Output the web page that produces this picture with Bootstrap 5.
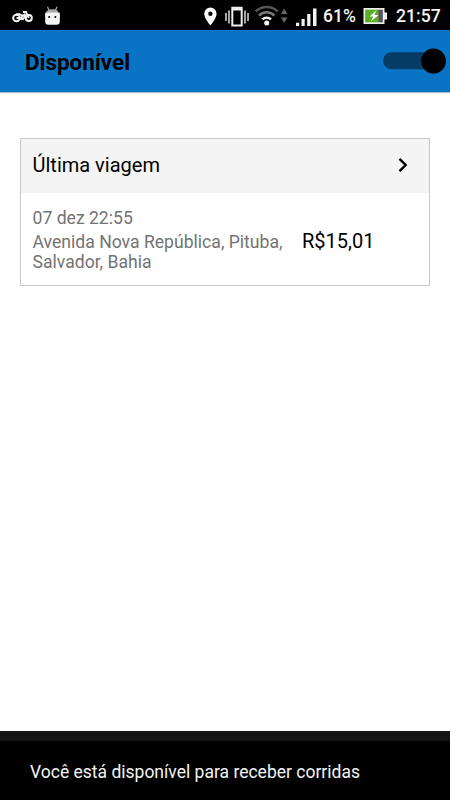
<!DOCTYPE html>
<html lang="pt-BR">
<head>
<meta charset="utf-8">
<meta name="viewport" content="width=device-width, initial-scale=1">
<title>Disponível</title>
<link href="https://cdn.jsdelivr.net/npm/bootstrap@5.3.0/dist/css/bootstrap.min.css" rel="stylesheet">
<style>
  body { font-family: Roboto, sans-serif; color: #000; background: #fff; line-height: 1; }
  svg { display: block; flex: none; }
  .status-bar { height: 30px; padding: 2px 10px 0 11px; background: #000; color: #f5f5f5; font-weight: 500; }
  .battery-level { font-size: 17.5px; margin-left: 5px; padding-top: 2px; width: 34px; white-space: nowrap; }
  .battery { margin: 0 0 1px 5px; }
  .clock { width: 44px; margin-left: 8px; padding-top: 2px; font-size: 17.6px; white-space: nowrap; }
  .app-bar { height: 62px; padding: 1px 4px 0 25px; background: #0a74c4; box-shadow: 0 1px 1px rgba(10,80,130,.35); }
  .app-title { font-size: 22.4px; font-weight: 700; line-height: 26px; }
  .switch-art { width: 63px; height: 30px; }
  .trip-card { margin: 46px 20px 0; height: 148px; border: 1px solid #c9c9c9; border-radius: 0; color: #000; }
  .trip-head { height: 54px; padding: 0 20px 3px 11.5px; background: #f4f4f4; border: 0; font-size: 20px; }
  .trip-head:first-child { border-radius: 0; }
  .trip-body { padding: 15px 0 0 11.5px; }
  .trip-place { width: 269.5px; color: #737373; font-size: 17.6px; line-height: 20.5px; }
  .trip-date { margin-bottom: 3px; }
  .trip-price { padding-top: 23px; font-size: 20px; }
  .snack { height: 69px; padding: 4px 30px 0; background: #000; color: #f4f4f4; border-top: 10px solid #151515; box-shadow: inset 0 0 0 #777; font-size: 17.5px; }
  main { border-bottom: 0; }
</style>
<script src="https://cdn.jsdelivr.net/npm/bootstrap@5.3.0/dist/js/bootstrap.bundle.min.js"></script>
</head>
<body class="d-flex flex-column vh-100 overflow-hidden">
  <div class="status-bar d-flex align-items-center justify-content-between">
    <div class="d-flex align-items-center">
      <svg width="22" height="24" viewBox="0 .5 22 24" fill="none" stroke="#f4f4f4" stroke-width="2">
        <circle cx="5.500" cy="14.500" r="3.300"/><circle cx="17.800" cy="14.500" r="3"/>
        <path d="M5.500 14.500h4l4.900-4M5 10.700h3.500l3 1.300h4M12 8.500h3l2.800 6M9 15.500h3l3-3.500" stroke-width="1.900"/>
      </svg>
      <svg class="ms-2" width="24" height="24" viewBox="0 .8 24 24">
        <path d="M6.500 3.500 8 7M16 3.500 14.500 7" stroke="#aaa" stroke-width="1.200"/>
        <path d="M5 10Q5.500 6 11.300 6T17.800 10z" fill="#aaa"/>
        <rect x="4.200" y="9.500" width="14.600" height="12" rx="3.200" fill="#f4f4f4"/>
        <path d="M4.200 9.500h14.600v4H4.200z" fill="#f4f4f4"/>
        <circle cx="8.200" cy="13.800" r="1" fill="#000"/><circle cx="14.400" cy="13.800" r="1" fill="#000"/>
      </svg>
    </div>
    <div class="d-flex align-items-center">
      <svg width="116" height="26" viewBox="202 2.500 116 26">
        <path fill="#fff" fill-rule="evenodd" d="M210.400 7a6.200 6.200 0 0 0-6.200 6.200c0 4.600 6.200 11.600 6.200 11.600s6.200-7 6.200-11.600A6.200 6.200 0 0 0 210.400 7zm0 4a2.200 2.200 0 1 1 0 4.400 2.200 2.200 0 0 1 0-4.400z"/>
        <path fill="none" stroke="#ededed" stroke-width="2" d="M232.300 7.300h9.400v17.800h-9.400zM232.300 9h9.400"/>
        <path fill="none" stroke="#ddd" stroke-width="1.500" d="M229 10v13M226 12.500v8M245 10v13M248 12.500v8"/>
        <g fill="none" stroke-width="2.500">
          <path stroke="#555" d="M255.700 11.200a15.500 15.500 0 0 1 22 0"/>
          <path stroke="#777" d="M259 15.100a10.800 10.800 0 0 1 15.400 0"/>
          <path stroke="#eee" d="M262.400 18.900a6.200 6.200 0 0 1 8.600 0"/>
        </g>
        <circle cx="266.700" cy="22.600" r="2.500" fill="#fff"/>
        <path fill="#666" d="m281 13.500 3.200-5.500 3.200 5.500zM281 17h6.400l-3.200 5.500z"/>
        <path fill="#f3f3f3" d="M296 22.300h3.200v3.200H296zM301.500 18.500h3.200v7h-3.200zM307.200 13.500h3.200v12h-3.200zM313 8h3.500v17.500H313z"/>
      </svg>
      <span class="battery-level">61%</span>
      <svg class="battery" width="26" height="18" viewBox="0 0 26 18">
        <path fill="#eee" d="M1.500 1h21v4.500H25v7h-2.500V17h-21z"/>
        <path fill="#58ad20" d="M3.200 2.700h13v12.600h-13z"/><path fill="#555" d="M16.200 2.700h4.600v12.600h-4.600z"/>
        <path fill="#fff" d="m14.500 3.200-7 6.200h3.700l-2.400 5 7.800-6.500h-4.200z"/>
      </svg>
      <span class="clock">21:57</span>
    </div>
  </div>

  <header class="app-bar d-flex align-items-center justify-content-between">
    <h1 class="app-title mb-0">Disponível</h1>
    <svg class="switch-art" viewBox="0 0 63 30" role="switch" aria-checked="true" aria-label="Disponível">
      <rect x="0" y="5.300" width="55" height="17" rx="8.500" fill="#063d66"/>
      <circle cx="50.500" cy="14.700" r="12.500" fill="#064477" opacity=".55"/>
      <circle cx="50.500" cy="13.900" r="12.400" fill="#000"/>
    </svg>
  </header>

  <main class="flex-grow-1">
    <section class="card trip-card">
      <div class="card-header trip-head d-flex align-items-center justify-content-between">
        <span>Última viagem</span>
        <svg width="12" height="16" viewBox="0 0 12 16"><path d="M2.500 1.800 8.700 8l-6.200 6.200" fill="none" stroke="#000" stroke-width="2.400"/></svg>
      </div>
      <div class="trip-body d-flex">
        <div class="trip-place">
          <div class="trip-date">07 dez 22:55</div>
          <div>Avenida Nova República, Pituba,<br>Salvador, Bahia</div>
        </div>
        <div class="trip-price">R$15,01</div>
      </div>
    </section>
  </main>

  <footer class="snack d-flex align-items-center" role="status">Você está disponível para receber corridas</footer>
</body>
</html>
